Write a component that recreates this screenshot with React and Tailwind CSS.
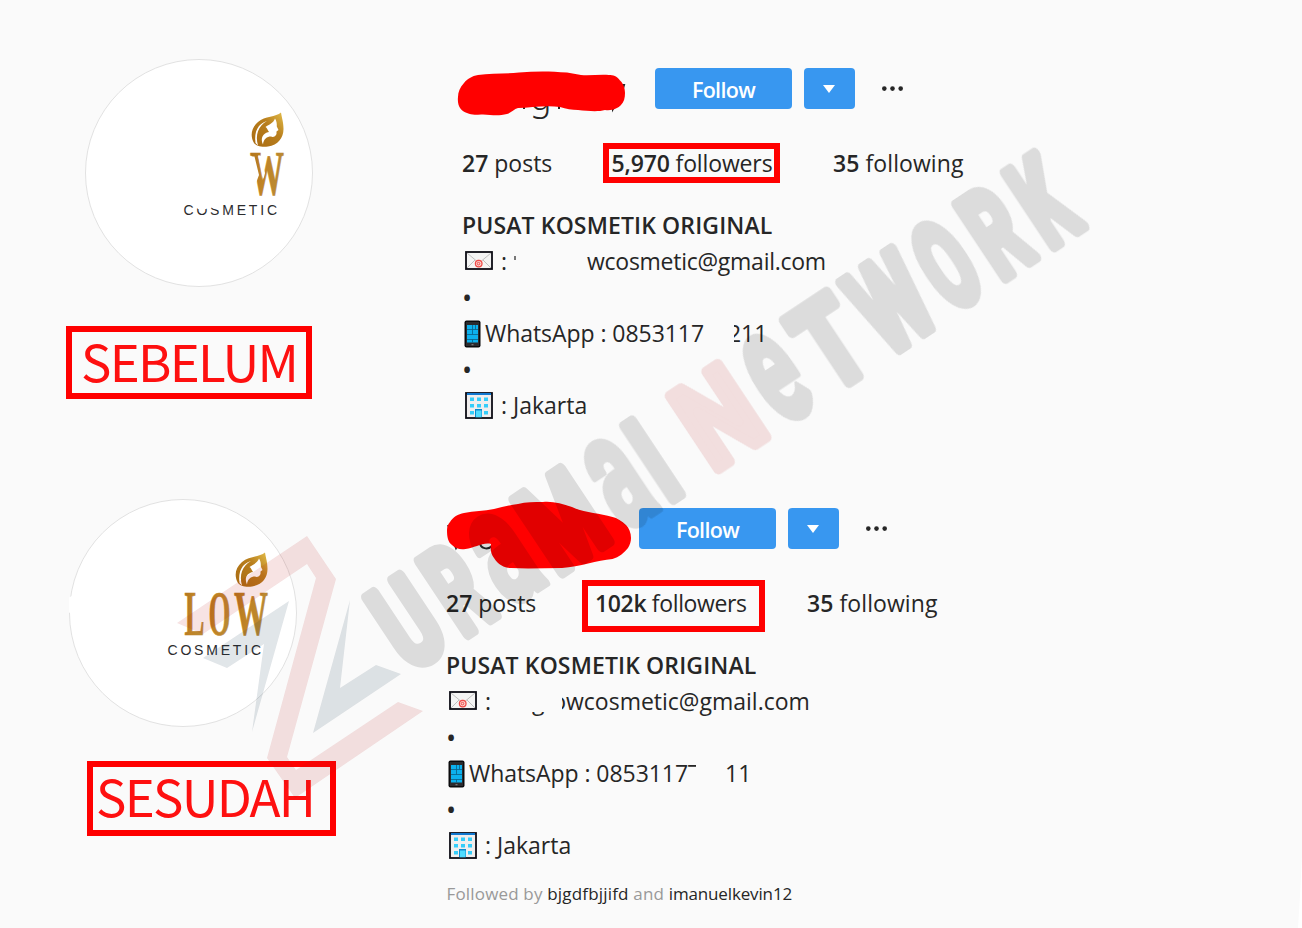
import React, { useLayoutEffect, useRef, useState } from "react";

/* Inline text whose tracking is adjusted so that it spans a given width. */
function Fit({ w, className = "", children }) {
  const ref = useRef(null);
  const [ls, setLs] = useState(0);
  useLayoutEffect(() => {
    const el = ref.current;
    setLs((w - el.offsetWidth) / el.textContent.length);
  }, [w]);
  return (
    <span ref={ref} className={"inline-block whitespace-pre " + className} style={{ letterSpacing: ls + "px" }}>
      {children}
    </span>
  );
}

/* One watermark letter stretched into the box [x0, x1] above the baseline. */
function WatermarkLetter({ ch, x0, x1, fill }) {
  const height = 98;
  const stroke = ch === "e" || ch === "a" ? 7 : 10;
  const [t, setT] = useState(null);
  useLayoutEffect(() => {
    const ctx = document.createElement("canvas").getContext("2d");
    ctx.font = "bold 100px 'Roboto'";
    const m = ctx.measureText(ch);
    const l = -m.actualBoundingBoxLeft;
    const r = m.actualBoundingBoxRight;
    const top = m.actualBoundingBoxAscent;
    const bottom = m.actualBoundingBoxDescent;
    const sx = (x1 - x0 - stroke) / (r - l);
    const sy = (height - stroke) / (top + bottom);
    setT(`translate(${x0 + stroke / 2 - l * sx} ${1 - stroke / 2 - bottom * sy}) scale(${sx} ${sy})`);
  }, [ch, x0, x1, stroke]);
  return (
    <text
      transform={t || undefined}
      fontFamily="Roboto, sans-serif"
      fontWeight="700"
      fontSize="100"
      fill={fill}
      stroke={fill}
      strokeWidth={stroke}
      strokeLinejoin="round"
      vectorEffect="non-scaling-stroke"
    >
      {ch}
    </text>
  );
}

const LETTERS = [
  ["U", -8, 46], ["R", 56, 104], ["a", 111, 162], ["M", 169, 239], ["a", 249, 297], ["I", 302, 324],
  ["N", 357, 427], ["e", 438, 486], ["T", 494, 558], ["W", 561, 636], ["O", 641, 691], ["R", 701, 751], ["K", 759, 809],
];

function Watermark() {
  return (
    <svg className="pointer-events-none absolute inset-0" width="1302" height="928" viewBox="0 0 1302 928">
      <path d="M1302 855 L1300 895 L1298 928 H1302 Z" fill="#fff" />
      <g opacity="0.118">
        <path d="M177 623 L307 536 L336 579 L287 757 L296 770 L398 702 L423 711 L295 798 L267 758 L316 578 L307 564 L203 634 Z" fill="#b71111" />
        <path d="M289 601 L203 658 L227 668 L264 644 L252 732 Z" fill="#082a43" />
        <path d="M350 600 L340 688 L376 665 L401 674 L313 733 Z" fill="#082a43" />
        <g transform="matrix(0.833 -0.553 0.553 0.833 418 673)">
          {LETTERS.map(([ch, a, b], i) => (
            <WatermarkLetter key={i} ch={ch} x0={a} x1={b} fill={ch === "N" ? "#b71111" : "#000"} />
          ))}
        </g>
      </g>
    </svg>
  );
}

function BrandLogo({ id, cropped }) {
  return (
    <svg className="block" width="228" height="228" viewBox="0 0 228 228">
      <defs>
        <linearGradient id={id} x1="0" y1="0" x2="1" y2="0.3">
          <stop offset="0" stopColor="#b0741c" />
          <stop offset="0.5" stopColor="#c08426" />
          <stop offset="1" stopColor="#b98a35" />
        </linearGradient>
        <linearGradient id={id + "leaf"} x1="0" y1="1" x2="1" y2="0">
          <stop offset="0" stopColor="#a86a12" />
          <stop offset="0.6" stopColor="#b97f1d" />
          <stop offset="1" stopColor="#e3bd4a" />
        </linearGradient>
      </defs>
      <circle cx="114" cy="114" r="113.5" fill="#fff" stroke="#e2e2e2" />
      {!cropped && <circle cx="5" cy="106" r="9" fill="#fff" />}
      <path d="M196 53.5 C191 58 180 57 173 63 C166 69 165 77 169 84 C171 87 177 88.5 183 87.5 C193 86 198.500 79 198.500 70 C198.500 63 197 60 196 53.5 Z" fill={`url(#${id}leaf)`} />
      <path d="M182 62 C173 65 169 72 170.500 84 L173 86.500 C170 76 173 67 182 62 Z" fill="#fff" />
      <path d="M190 59.500 C188.500 64 184 65.500 180.500 68 C182 68.500 182.500 71 184 73 C178 74 175 79 178 85.500 C178.500 80 182 77.500 186 77.500 C188 78.500 190.500 77.500 191.500 75 L191.500 72.500 L193.500 71 L191.800 67.500 C192 64.500 191.500 61.500 190 59.500 Z" fill="#fff" />
      <g fill={`url(#${id})`} stroke={`url(#${id})`} strokeWidth="0.700" fontFamily="'Liberation Serif', serif" fontWeight="700" fontSize="63">
        {!cropped && <text x="115.500" y="136" textLength="20" lengthAdjust="spacingAndGlyphs">L</text>}
        {!cropped && <text x="139.500" y="136" textLength="22" lengthAdjust="spacingAndGlyphs">O</text>}
        <text x="165" y="136" textLength="34" lengthAdjust="spacingAndGlyphs">W</text>
      </g>
      {cropped && <path d="M163 97.500 L169.500 97.500 L174 116 L171 124 L174 140 L163 140 Z M173 96.500 L175 96.500 L180 114 L178.500 120 Z" fill="#fff" />}
      <text x="98.500" y="155.500" fontFamily="'Liberation Sans', sans-serif" fontSize="14" textLength="93.500" lengthAdjust="spacing" fill="#2c2c2e">COSMETIC</text>
      {cropped && <path d="M106 143 L110 147 L113 150 C120 152 125 148 127 149 L133 150 L138 143 Z" fill="#fff" />}
    </svg>
  );
}

function Envelope() {
  return (
    <svg className="mt-[7px] block shrink-0" width="28" height="20" viewBox="0 0 28 20">
      <rect x="1" y="1" width="26" height="17" fill="#f4f4f4" stroke="#0c0c14" strokeWidth="1.800" />
      <path d="M2 2 L14 12 L26 2 M2 17 L10 9 M26 17 L18 9" fill="none" stroke="#b9b9b9" strokeWidth="0.900" />
      <circle cx="13.700" cy="12.600" r="4" fill="#fbd5d2" />
      <circle cx="13.700" cy="12.600" r="3.300" fill="none" stroke="#ee4a48" strokeWidth="1.200" />
      <circle cx="13.500" cy="12.600" r="1.300" fill="none" stroke="#ee4a48" />
    </svg>
  );
}

function Phone() {
  return (
    <svg className="mt-1 block shrink-0" width="17" height="28" viewBox="0 0 17 28">
      <rect x="0.500" y="0.500" width="16" height="27" rx="2" fill="#0b0b0d" />
      <rect x="2" y="2" width="13" height="24" fill="#2b2b2e" />
      <rect x="3" y="5" width="11" height="17.500" fill="#0cb1ee" />
      <path d="M3 9.500 H14 M3 14.500 H14 M3 19.500 H14 M8.500 5 V14.500 M11.500 5 V9.500 M8.500 19.500 V22.500" stroke="#0a5f86" strokeWidth="0.800" />
      <rect x="7.500" y="24" width="2" height="1.300" fill="#777" />
    </svg>
  );
}

function Building() {
  const xs = [5, 12, 19];
  const ys = [5.5, 12, 19];
  return (
    <svg className="mt-1 block shrink-0" width="28" height="28" viewBox="0 0 28 28">
      <rect x="1" y="1" width="26" height="25" fill="#f0eeee" stroke="#0c0c14" strokeWidth="1.800" />
      <rect x="2" y="1" width="24" height="2" fill="#1178cf" />
      {ys.map((y) => xs.map((x) => <rect key={x + "-" + y} x={x} y={y} width="4" height="3.500" fill="#35cdfa" />))}
      <rect x="10" y="17" width="7" height="8.200" fill="#0a8bd0" />
      <rect x="11" y="18.500" width="5.500" height="6.700" fill="#4fdcff" />
    </svg>
  );
}

function FollowButtons() {
  return (
    <>
      <button className="h-[41px] w-[137px] rounded-[4px] bg-[#3897f0] pt-[1px] text-[21.5px] leading-[37px] font-semibold text-white">
        <Fit w={63}>Follow</Fit>
      </button>
      <button className="ml-3 flex h-[41px] w-[51px] items-center justify-center rounded-[4px] bg-[#3897f0] pr-[2px]">
        <svg width="12" height="8" viewBox="0 0 12 8"><path d="M0 0 H12 L6 8 Z" fill="#fff" /></svg>
      </button>
      <svg className="ml-[26px]" width="24" height="6" viewBox="0 0 24 6">
        <circle cx="3.300" cy="2.600" r="2.300" fill="#262626" />
        <circle cx="11.500" cy="2.600" r="2.300" fill="#262626" />
        <circle cx="19.700" cy="2.600" r="2.300" fill="#262626" />
      </svg>
    </>
  );
}

const bullet = <div className="h-9 text-[27px] leading-[35px]">•</div>;

export default function App() {
  return (
    <div className="relative h-[928px] w-[1302px] overflow-hidden bg-[#fafafa] font-['Open_Sans','Noto_Sans',sans-serif] text-[23px] leading-[34px] text-[#262626]">
      <section className="flex h-[440px]">
        <div className="w-[462px] shrink-0 pt-[59px]">
          <div className="ml-[85px] h-[228px]"><BrandLogo id="goldA" cropped /></div>
          <div className="mt-[39px] ml-[66px] flex h-[73px] w-[246px] items-center border-[6px] border-[#f00] pb-[5px] pl-[9px] font-['Noto_Sans_CJK_SC',sans-serif] text-[51px] leading-none text-[#fe1010]">
            <Fit w={216}>SEBELUM</Fit>
          </div>
        </div>
        <div className="pt-[68px]">
          <div className="flex h-[41px] items-center">
            <div className="h-[41px] w-[193px] shrink-0">
              <svg className="block overflow-visible" width="193" height="54" viewBox="462 68 193 54">
                <text x="530" y="110" fontFamily="'Noto Sans', sans-serif" fontWeight="300" fontSize="36" fill="#262626">g</text>
                <path d="M524 100 V109 M559 100 V109 M613 100 V109 L616 104 M621 85 L624 85 L622 92" stroke="#262626" strokeWidth="2" fill="none" />
                <rect x="525" y="119" width="30" height="6" fill="#fafafa" />
                <path d="M458 97 C457 106 461 111 467 113 C473 116 478 114 483 114.500 C492 115 499 116 507 114 C511 113 514 109 518 108 C530 108 545 105 560 107 C566 109 572 110 578 110 C588 111 598 112 605 110 C613 111 618 108 621 105 C624 102 625 98 625 93 C625 88 623 83 620 80.500 C617 76 613 75 609 75 C600 74 590 76 581 75 L567 72.500 C550 71 535 71 519 72.500 C505 74 490 73 478 75 C472 76 467 79 464 83 C460 87 458 92 458 97 Z" fill="#f00" />
              </svg>
            </div>
            <FollowButtons />
          </div>
          <div className="mt-[34px] flex h-10 leading-[26px]">
            <div className="w-[141px] shrink-0 pt-[7px]"><Fit w={90}><b className="font-semibold">27</b> posts</Fit></div>
            <div className="h-10 w-[177px] shrink-0 border-[6px] border-[#f00] pt-[1px] pl-[2.5px]"><Fit w={161}><b className="font-semibold">5,970</b> followers</Fit></div>
            <div className="ml-[53px] pt-[7px]"><Fit w={131}><b className="font-semibold">35</b> following</Fit></div>
          </div>
          <div className="mt-[25px]">
            <div className="h-9 font-semibold"><Fit w={310}>PUSAT KOSMETIK ORIGINAL</Fit></div>
            <div className="flex h-9 pl-[3px]">
              <Envelope />
              <span className="ml-2 w-[86px]"><span>:</span><span className="ml-[7px] inline-block h-1 w-[1.5px] bg-[#777] align-[10px]" /></span>
              <Fit w={239}>wcosmetic@gmail.com</Fit>
            </div>
            {bullet}
            <div className="flex h-9 pl-[2px]">
              <Phone />
              <Fit w={219} className="ml-1">WhatsApp : 0853117</Fit>
              <span className="ml-[28px] flex w-[9px] justify-end overflow-hidden">
                <span className="flex w-[7px] justify-end overflow-hidden">2</span>
              </span>
              <Fit w={26}>11</Fit>
            </div>
            {bullet}
            <div className="flex h-9 pl-[3px]">
              <Building />
              <Fit w={86} className="ml-2">: Jakarta</Fit>
            </div>
          </div>
        </div>
      </section>

      <section className="flex h-[488px]">
        <div className="w-[446px] shrink-0 pt-[59px]">
          <div className="ml-[69px] h-[228px]"><BrandLogo id="goldB" /></div>
          <div className="mt-[34px] ml-[87px] flex h-[75px] w-[249px] items-center border-[6px] border-[#f00] pb-[6px] pl-[3px] font-['Noto_Sans_CJK_SC',sans-serif] text-[51px] leading-none text-[#fe1010]">
            <Fit w={218}>SESUDAH</Fit>
          </div>
        </div>
        <div className="pt-[68px]">
          <div className="flex h-[41px] items-center">
            <div className="h-[41px] w-[193px] shrink-0">
              <svg className="block overflow-visible" width="193" height="64" viewBox="446 508 193 64">
                <path d="M448 525 L452 535 M453 540 L456 548 L459 542 M467 540 V548 M480 542 C480 549 488 550 492 546" stroke="#262626" strokeWidth="2" fill="none" />
                <path d="M447 530 C447 537 448 542 452 545 C456 549 461 550 465.500 549 C475 548 483 542 491 544 C490 549 491 554 494 558 C498 565 505 568 511 568 C528 569 545 568 562 568 C580 567 597 560 612.500 559 C619 557 624 553 628 548 C630 545 631 541 631 538 C631 533 629 528 626 525 C622 521 617 518 612.500 517 C599 513 585 513 572 507 C562 504 553 501 543 502 C534 502 526 502 518 504 C510 505 502 507 494 509 C484 511 474 511 464 513 C458 514 453 517 450 522 C448 524 447 527 447 530 Z" fill="#f00" />
              </svg>
            </div>
            <FollowButtons />
          </div>
          <div className="mt-[31px] flex h-[52px] leading-[26px]">
            <div className="w-[136px] shrink-0 pt-[10px]"><Fit w={90}><b className="font-semibold">27</b> posts</Fit></div>
            <div className="h-[52px] w-[183px] shrink-0 border-[6px] border-[#f00] pt-1 pl-[7px]"><Fit w={152}><b className="font-semibold">102k</b> followers</Fit></div>
            <div className="ml-[42px] pt-[10px]"><Fit w={131}><b className="font-semibold">35</b> following</Fit></div>
          </div>
          <div className="mt-4">
            <div className="h-9 font-semibold"><Fit w={310}>PUSAT KOSMETIK ORIGINAL</Fit></div>
            <div className="flex h-9 pl-[3px]">
              <Envelope />
              <span className="ml-2 w-[47px]">:</span>
              <span className="flex h-[35px] w-[30px] flex-col justify-end overflow-hidden">
                <span className="flex h-[7px] items-end overflow-hidden leading-[36px]">g</span>
              </span>
              <span className="flex w-[4px] justify-end overflow-hidden">o</span>
              <Fit w={244}>wcosmetic@gmail.com</Fit>
            </div>
            {bullet}
            <div className="flex h-9 pl-[2px]">
              <Phone />
              <Fit w={219} className="ml-1">WhatsApp : 0853117</Fit>
              <span className="-ml-[1px] h-[12px] w-[9px] overflow-hidden">7</span>
              <Fit w={26} className="ml-[29px]">11</Fit>
            </div>
            {bullet}
            <div className="flex h-9 pl-[3px]">
              <Building />
              <Fit w={86} className="ml-2">: Jakarta</Fit>
            </div>
          </div>
          <div className="mt-[18px] flex pl-[0.5px] text-[17px] leading-[24px] text-[#999]">
            <Fit w={101}>{"Followed by "}</Fit>
            <Fit w={81} className="text-[#262626]">bjgdfbjjifd</Fit>
            <Fit w={40}>{" and "}</Fit>
            <Fit w={123} className="text-[#262626]">imanuelkevin12</Fit>
          </div>
        </div>
      </section>
      <Watermark />
    </div>
  );
}
